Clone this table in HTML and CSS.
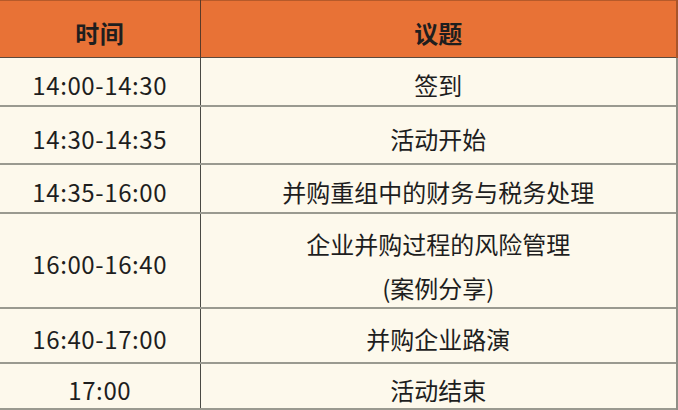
FILE: index.html
```html
<!DOCTYPE html>
<html lang="zh-CN">
<head>
<meta charset="utf-8">
<link rel="stylesheet" href="styles.css">
</head>
<body>
<table class="agenda">
  <colgroup>
    <col class="col-time">
    <col class="col-topic">
  </colgroup>
  <thead>
    <tr class="head">
      <th>时间</th>
      <th>议题</th>
    </tr>
  </thead>
  <tbody>
    <tr class="r1"><td>14:00-14:30</td><td>签到</td></tr>
    <tr class="r2"><td>14:30-14:35</td><td>活动开始</td></tr>
    <tr class="r3"><td>14:35-16:00</td><td>并购重组中的财务与税务处理</td></tr>
    <tr class="r4"><td>16:00-16:40</td><td class="two"><div class="line1">企业并购过程的风险管理</div><div class="line2">(案例分享)</div></td></tr>
    <tr class="r5"><td>16:40-17:00</td><td>并购企业路演</td></tr>
    <tr class="r6"><td>17:00</td><td>活动结束</td></tr>
  </tbody>
</table>
</body>
</html>
```
FILE: styles.css
```css
html, body {
  margin: 0;
  padding: 0;
  background: #fdf9ec;
}
.agenda {
  width: 678px;
  border-collapse: collapse;
  table-layout: fixed;
  font-family: "Noto Sans CJK SC", "Noto Sans", sans-serif;
  font-size: 24px;
  color: #1e1e1e;
  background: #fdf9ec;
}
.col-time { width: 200px; }
.agenda th, .agenda td {
  text-align: center;
  vertical-align: middle;
  padding: 8px 0 0 0;
  line-height: 28px;
}
.agenda td:first-child, .agenda th:first-child {
  letter-spacing: 0.6px;
  border-right: 1.5px solid #4a4a44;
}
.agenda td:last-child, .agenda th:last-child {
  border-right: 2px solid #8f8f86;
}
.agenda tbody tr {
  border-bottom: 2px solid #9a9a90;
}
.head {
  background: #e87236;
  border-top: 1px solid #b65a2a;
  border-bottom: 1.5px solid #5a4a3e;
}
.head th {
  font-weight: 700;
}
.head th:first-child { border-right-color: #5a3a28; }
.head th:last-child { border-right-color: #a8552a; }
.head { height: 57px; }
.r1 { height: 48px; }
.r2 { height: 58px; }
.r3 { height: 49px; }
.r4 { height: 95px; }
.r5 { height: 55px; }
.r6 { height: 46px; }
.agenda td.two {
  vertical-align: top;
  padding-top: 6px;
}
.line1 {
  line-height: 47px;
  height: 47px;
}
.line2 {
  line-height: 42px;
  height: 39px;
}
```
